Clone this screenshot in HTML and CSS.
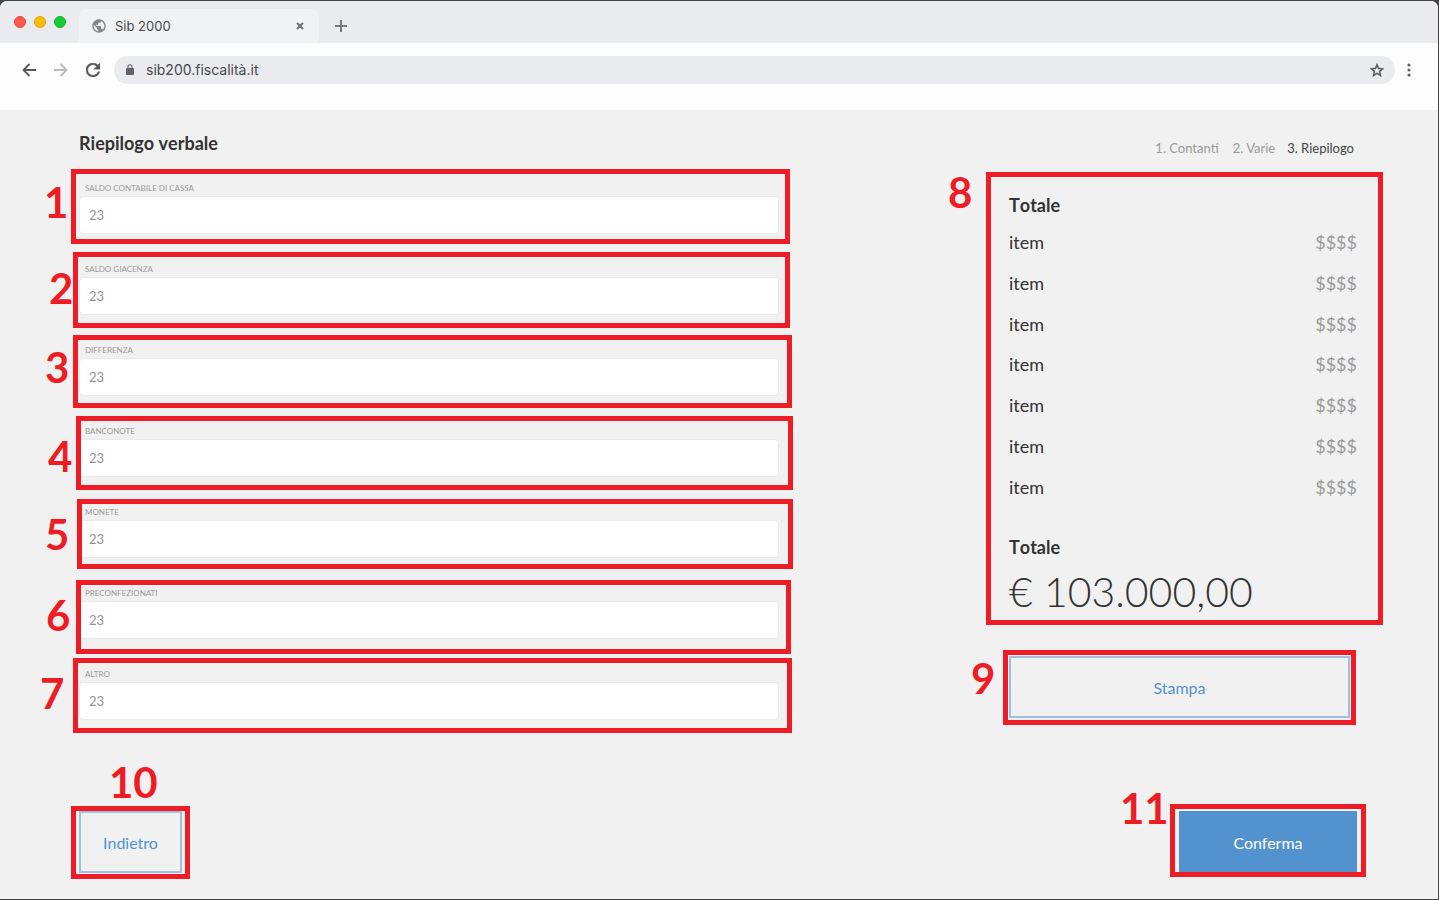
FILE: index.html
```html
<!DOCTYPE html>
<html lang="it">
<head>
<meta charset="utf-8">
<title>Sib 2000</title>
<link rel="stylesheet" href="styles.css">
</head>
<body>
<div class="window">
  <div class="tabbar">
    <div class="lights"><span class="light light-red"></span><span class="light light-yellow"></span><span class="light light-green"></span></div>
    <div class="tab">
      <svg class="icon" width="16" height="16" viewBox="0 0 24 24"><path fill="#80868b" d="M12 2C6.480 2 2 6.480 2 12s4.480 10 10 10 10-4.480 10-10S17.520 2 12 2zm-1 17.930c-3.950-.49-7-3.850-7-7.930 0-.62.080-1.210.21-1.790L9 15v1c0 1.100.9 2 2 2v1.930zm6.900-2.540c-.26-.81-1-1.390-1.900-1.390h-1v-3c0-.55-.45-1-1-1H8v-2h2c.55 0 1-.45 1-1V7h2c1.100 0 2-.9 2-2v-.41c2.930 1.190 5 4.060 5 7.410 0 2.080-.8 3.970-2.100 5.390z"/></svg>
      <span class="tab-title">Sib 2000</span>
      <button class="icon-button" aria-label="Chiudi scheda"><svg width="8" height="8" viewBox="0 0 8 8"><path d="M1 1l6 6M7 1L1 7" stroke="#6b6e73" stroke-width="2"/></svg></button>
    </div>
    <button class="icon-button new-tab" aria-label="Nuova scheda"><svg width="12" height="12" viewBox="0 0 12 12"><path d="M6 0v12M0 6h12" stroke="#75787d" stroke-width="2"/></svg></button>
  </div>
  <div class="toolbar">
    <button class="icon-button" aria-label="Indietro nella cronologia"><svg width="14" height="14" viewBox="0 0 14 14"><path d="M14 7H1.500M7.500 1L1.500 7l6 6" fill="none" stroke="#55585d" stroke-width="1.800"/></svg></button>
    <button class="icon-button" aria-label="Avanti"><svg width="14" height="14" viewBox="0 0 14 14"><path d="M0 7h12.500M6.500 1l6 6-6 6" fill="none" stroke="#b9babd" stroke-width="1.800"/></svg></button>
    <button class="icon-button" aria-label="Ricarica"><svg width="14" height="14" viewBox="4 4 16 16"><path fill="#55585d" stroke="#55585d" stroke-width=".5" d="M17.650 6.350C16.200 4.900 14.210 4 12 4c-4.420 0-7.990 3.580-7.990 8s3.570 8 7.990 8c3.730 0 6.840-2.550 7.730-6h-2.080c-.82 2.330-3.040 4-5.650 4-3.310 0-6-2.690-6-6s2.690-6 6-6c1.660 0 3.140.69 4.220 1.780L13 11h7V4l-2.350 2.350z"/></svg></button>
    <div class="address">
      <svg class="icon" width="8" height="11" viewBox="0 0 8 11"><rect y="4" width="8" height="7" rx="1" fill="#5f6368"/><path d="M2 4.500V2.700a2 2 0 0 1 4 0v1.800" fill="none" stroke="#5f6368" stroke-width="1.100"/></svg>
      <input class="url" type="text" aria-label="Indirizzo" value="sib200.fiscalità.it">
      <button class="icon-button" aria-label="Aggiungi ai preferiti"><svg width="14" height="14" viewBox="2 2 20 19"><path fill="#55585d" stroke="#55585d" stroke-width=".6" d="M22 9.240l-7.190-.62L12 2 9.190 8.630 2 9.240l5.460 4.730L5.820 21 12 17.270 18.180 21l-1.630-7.030L22 9.240zM12 15.400l-3.760 2.270 1-4.280-3.320-2.880 4.380-.38L12 6.100l1.710 4.040 4.380.38-3.320 2.880 1 4.280L12 15.400z"/></svg></button>
    </div>
    <button class="icon-button menu" aria-label="Menu"><svg width="4" height="14" viewBox="0 0 4 14"><g fill="#5f6368"><circle cx="2" cy="2" r="1.600"/><circle cx="2" cy="7" r="1.600"/><circle cx="2" cy="12" r="1.600"/></g></svg></button>
  </div>

  <main class="page">
    <header class="page-header">
      <h1 class="heading">Riepilogo verbale</h1>
      <ol class="steps"><li>1. Contanti</li><li>2. Varie</li><li class="current">3. Riepilogo</li></ol>
    </header>
    <div class="columns">
      <form class="fields">
        <div class="field"><label class="label" for="f1">SALDO CONTABILE DI CASSA</label><input class="input" id="f1" type="text" value="23"><span class="mark mark-1"><b class="number">1</b></span></div>
        <div class="field"><label class="label" for="f2">SALDO GIACENZA</label><input class="input" id="f2" type="text" value="23"><span class="mark mark-2"><b class="number">2</b></span></div>
        <div class="field"><label class="label" for="f3">DIFFERENZA</label><input class="input" id="f3" type="text" value="23"><span class="mark mark-3"><b class="number">3</b></span></div>
        <div class="field"><label class="label" for="f4">BANCONOTE</label><input class="input" id="f4" type="text" value="23"><span class="mark mark-4"><b class="number">4</b></span></div>
        <div class="field"><label class="label" for="f5">MONETE</label><input class="input" id="f5" type="text" value="23"><span class="mark mark-5"><b class="number">5</b></span></div>
        <div class="field"><label class="label" for="f6">PRECONFEZIONATI</label><input class="input" id="f6" type="text" value="23"><span class="mark mark-6"><b class="number">6</b></span></div>
        <div class="field"><label class="label" for="f7">ALTRO</label><input class="input" id="f7" type="text" value="23"><span class="mark mark-7"><b class="number">7</b></span></div>
      </form>
      <aside class="side">
        <section class="summary">
          <h2 class="heading">Totale</h2>
          <table class="items">
            <tbody>
              <tr><td>item</td><td class="amount">$$$$</td></tr>
              <tr><td>item</td><td class="amount">$$$$</td></tr>
              <tr><td>item</td><td class="amount">$$$$</td></tr>
              <tr><td>item</td><td class="amount">$$$$</td></tr>
              <tr><td>item</td><td class="amount">$$$$</td></tr>
              <tr><td>item</td><td class="amount">$$$$</td></tr>
              <tr><td>item</td><td class="amount">$$$$</td></tr>
            </tbody>
          </table>
          <h2 class="heading">Totale</h2>
          <p class="total">€ 103.000,00</p>
          <span class="mark mark-8"><b class="number">8</b></span>
        </section>
        <div class="action print"><button class="button">Stampa</button><span class="mark mark-9"><b class="number">9</b></span></div>
      </aside>
    </div>
    <footer class="actions">
      <div class="action back"><button class="button">Indietro</button><span class="mark mark-10"><b class="number">10</b></span></div>
      <div class="action confirm"><button class="button primary">Conferma</button><span class="mark mark-11"><b class="number">11</b></span></div>
    </footer>
  </main>
</div>
</body>
</html>
```
FILE: styles.css
```css
* { box-sizing: border-box; }
body { margin: 0; background: #444346; font-family: Lato, sans-serif; color: #333; }
button, input { font: inherit; }
h1, h2, p, ol { margin: 0; padding: 0; }

.window { display: flex; flex-direction: column; min-height: calc(100vh - 2px); margin: 1px 1px 1px 0; border-radius: 7px 7px 0 0; overflow: hidden; background: #f1f1f1; }
.icon { flex: none; }
.icon-button { display: flex; align-items: center; justify-content: center; flex: none; padding: 0; border: 0; background: none; }

/* Browser chrome */
.tabbar { display: flex; height: 42px; padding-left: 14px; background: #eaebef; font-family: Inter, sans-serif; }
.lights { display: flex; gap: 8px; padding-top: 15px; width: 65px; }
.light { width: 12px; height: 12px; border-radius: 50%; border: 1px solid; }
.light-red { background: #ff5a50; border-color: #e2463f; }
.light-yellow { background: #ffbd05; border-color: #e0a010; }
.light-green { background: #17cb35; border-color: #12ac28; }
.tab { display: flex; align-items: center; width: 240px; margin-top: 8px; padding: 0 15px 0 12px; border-radius: 8px 8px 0 0; background: #f1f2f4; }
.tab-title { flex: 1; margin-left: 8px; font-size: 13px; color: #46494d; }
.new-tab { margin: 8px 0 0 16px; }
.toolbar { display: flex; align-items: center; height: 67px; padding: 0 27px 14px 22px; gap: 18px; background: #fdfdfd; }
.address { display: flex; align-items: center; flex: 1; height: 28px; margin-left: -4px; padding: 0 11px 0 12px; border-radius: 14px; background: #eaebef; }
.url { flex: 1; min-width: 0; margin-left: 12px; padding: 0; border: 0; background: none; font: 14px/20px Inter, sans-serif; color: #46494d; }
.menu { margin-left: -6px; }

/* Page */
.page { display: flex; flex-direction: column; flex: 1; padding: 0 81px 26px 79px; }
.page-header { display: flex; justify-content: space-between; height: 70px; padding-top: 22px; }
.heading { font-size: 18px; line-height: 22px; font-weight: 700; font-kerning: none; }
.steps { display: flex; gap: 14px; padding: 8px 3px 0 0; list-style: none; font-size: 13px; line-height: 16px; color: #999; }
.current { margin-left: -2px; color: #444; }
.columns { display: grid; grid-template-columns: minmax(0, 1fr) 348px; column-gap: 230px; }
.fields { display: flex; flex-direction: column; gap: 27px; }
.field { position: relative; display: flex; flex-direction: column; }
.label { padding-left: 6px; font-size: 8px; line-height: 16px; color: #999; }
.input { height: 38px; padding: 0 9px; border: 1px solid #e9e9e9; border-radius: 4px; background: #fff; font-size: 13px; color: #939393; }

.summary { position: relative; padding-top: 14px; }
.items { width: 100%; height: 285px; margin: 6px 0 29px; border-collapse: collapse; font-size: 18px; line-height: 22px; }
.items td { padding: 0; }
.items .amount { text-align: right; color: #999; }
.total { margin-top: 8px; font-size: 41px; line-height: 52px; font-weight: 300; }

.action { position: relative; display: flex; height: 62px; }
.print { margin: 38px 7px 0 0; }
.actions { display: flex; justify-content: space-between; margin-top: auto; }
.back { width: 103px; }
.confirm { width: 178px; }
.button { flex: 1; border: 2px solid #9fc0e0; background: none; font-size: 16px; color: #5293cf; }
.primary { border-color: #5293cf; background: #5293cf; color: #fff; }

/* Numbered callouts drawn over the parts they name */
.mark { position: absolute; border: 5px solid #ee1c24; pointer-events: none; }
.number { position: absolute; font-size: 42px; line-height: 36px; font-weight: 700; color: #ee1c24; }
.mark-1 { inset: -11px -11px -10px -8px; }
.mark-2 { inset: -9px -11px -13px -6px; }
.mark-3 { inset: -7px -13px -12px -6px; }
.mark-4 { inset: -7px -14px -13px -3px; }
.mark-5 { inset: -5px -14px -11px -2px; }
.mark-6 { inset: -5px -12px -15px -3px; }
.mark-7 { inset: -8px -13px -13px -6px; }
.mark-8 { inset: -8px -26px -7px -23px; }
.mark-9 { inset: -6px -6px -7px -6px; }
.mark-10 { inset: -5px -8px -6px -8px; }
.mark-11 { inset: -7px -9px -4px -9px; }
.mark-1 .number { left: -32px; top: 10px; }
.mark-2 .number { left: -29px; top: 13px; }
.mark-3 .number { left: -33px; top: 9px; }
.mark-4 .number { left: -33px; top: 17px; }
.mark-5 .number { left: -37px; top: 12px; }
.mark-6 .number { left: -35px; top: 12px; }
.mark-7 .number { left: -38px; top: 12px; }
.mark-8 .number { left: -43px; top: -3px; }
.mark-9 .number { left: -37px; top: 5px; }
.mark-10 .number { left: 33px; top: -47px; }
.mark-11 .number { left: -55px; top: -19px; }
```
